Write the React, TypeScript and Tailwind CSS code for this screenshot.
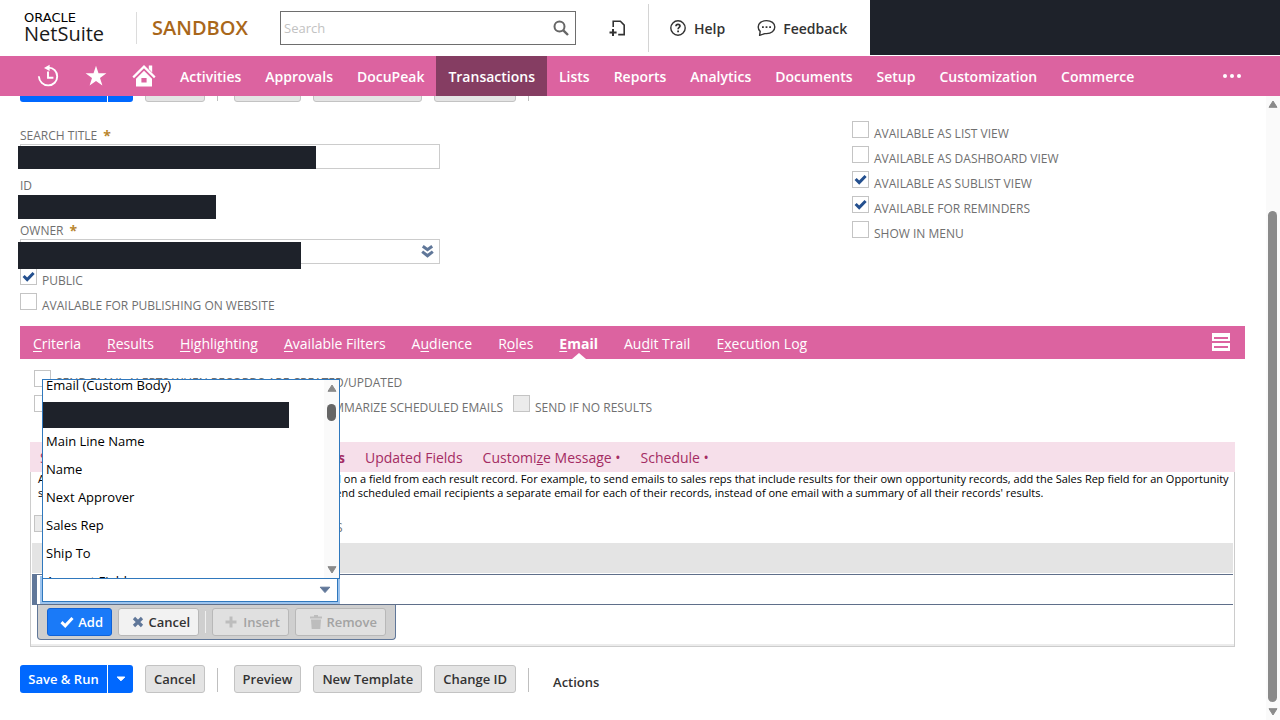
import type { ReactNode } from "react";
import clsx from "clsx";

interface CheckProps {
  id: string;
  label: string;
  checked?: boolean;
  disabled?: boolean;
}

const navItems = [
  "Activities",
  "Approvals",
  "DocuPeak",
  "Transactions",
  "Lists",
  "Reports",
  "Analytics",
  "Documents",
  "Setup",
  "Customization",
  "Commerce",
];

// [before, access key, after]
const tabs = [
  ["", "C", "riteria"],
  ["", "R", "esults"],
  ["", "H", "ighlighting"],
  ["", "A", "vailable Filters"],
  ["A", "u", "dience"],
  ["R", "o", "les"],
  ["", "E", "mail"],
  ["Au", "d", "it Trail"],
  ["E", "x", "ecution Log"],
];

const viewOptions: CheckProps[] = [
  { id: "list-view", label: "AVAILABLE AS LIST VIEW" },
  { id: "dashboard-view", label: "AVAILABLE AS DASHBOARD VIEW" },
  { id: "sublist-view", label: "AVAILABLE AS SUBLIST VIEW", checked: true },
  { id: "reminders", label: "AVAILABLE FOR REMINDERS", checked: true },
  { id: "show-in-menu", label: "SHOW IN MENU" },
];

const recipientFields = [
  "Email (Custom Body)",
  "",
  "Main Line Name",
  "Name",
  "Next Approver",
  "Sales Rep",
  "Ship To",
  "Account Fields...",
];

function Check({ id, label, checked, disabled }: CheckProps) {
  return (
    <div className="flex h-[25px] shrink-0 items-start gap-[5px]">
      <span className="relative flex h-[17px] w-[17px] shrink-0">
        <input
          id={id}
          type="checkbox"
          defaultChecked={checked}
          disabled={disabled}
          className="h-[17px] w-[17px] appearance-none border border-[#c4c4c4] bg-white disabled:bg-[#ebebeb]"
        />
        {checked && (
          <svg viewBox="0 0 17 17" className="pointer-events-none absolute inset-0 h-[17px] w-[17px]">
            <path d="M3.6 8L7.2 11.6L13.6 5" fill="none" stroke="#24508f" strokeWidth="3" />
          </svg>
        )}
      </span>
      <label htmlFor={id} className="mt-1 text-xs leading-[17px] whitespace-nowrap text-[#6f6f6f]">
        {label}
      </label>
    </div>
  );
}

function FieldLabel({ htmlFor, required, children }: { htmlFor: string; required?: boolean; children: ReactNode }) {
  return (
    <label htmlFor={htmlFor} className="flex gap-1.5 pt-0.5 text-xs leading-4 text-[#6f6f6f]">
      {children}
      {required && <span className="text-sm leading-4 font-bold text-[#b9862f]">*</span>}
    </label>
  );
}

function GreyButton({ children }: { children: ReactNode }) {
  return (
    <button className="h-7 rounded-[3px] border border-[#c3c3c3] bg-[#e4e4e4] px-2 pt-0.5 text-[13px] font-semibold whitespace-nowrap text-[#333]">
      {children}
    </button>
  );
}

function ActionBar({ withActions }: { withActions?: boolean }) {
  return (
    <div className="flex h-7 shrink-0 items-center gap-3">
      <div className="flex h-7 gap-px">
        <button className="w-[87px] rounded-l-[3px] bg-[#0068ff] pt-0.5 text-[13px] font-semibold whitespace-nowrap text-white">
          Save &amp; Run
        </button>
        <button aria-label="More save options" className="flex w-[25px] items-center justify-center rounded-r-[3px] bg-[#0068ff]">
          <svg viewBox="0 0 10 6" className="h-1.5 w-2.5">
            <path d="M1.2 1H8.8L5 4.8Z" fill="#fff" stroke="#fff" strokeLinejoin="round" />
          </svg>
        </button>
      </div>
      <GreyButton>Cancel</GreyButton>
      <div className="mr-1 h-6 w-px translate-y-px bg-[#bfbfbf]" />
      <GreyButton>Preview</GreyButton>
      <GreyButton>New Template</GreyButton>
      <GreyButton>Change ID</GreyButton>
      <div className="h-6 w-px translate-y-px bg-[#bfbfbf]" />
      {withActions && (
        <button className="mt-2 ml-3 text-[13px] font-semibold text-[#333]">Actions</button>
      )}
    </div>
  );
}

function Header() {
  return (
    <header className="flex h-14 shrink-0 bg-white">
      <div className="flex shrink-0 items-center">
        <div className="ml-6 flex w-28 flex-col">
          <span className="font-['DejaVu_Sans'] text-[13px] leading-[10px] text-black">ORACLE</span>
          <span className="text-xl leading-[21px] text-[#1a1a1a]">NetSuite</span>
        </div>
        <div className="h-8 w-px bg-[#dcdcdc]" />
        <span className="w-[143px] pl-[15px] text-xl font-semibold text-[#a9671a]">SANDBOX</span>
        <div className="flex h-[34px] w-[296px] items-center border border-[#6e6e6e]">
          <input
            aria-label="Search"
            placeholder="Search"
            className="h-full min-w-0 flex-1 px-[3px] text-[13px] text-[#333] outline-none placeholder:text-[#c2c2c2]"
          />
          <button aria-label="Run search" className="mr-[5px] flex">
            <svg viewBox="0 0 18 18" className="h-[18px] w-[18px]" fill="none" stroke="#666">
              <circle cx="7.5" cy="7.5" r="5" strokeWidth="2" />
              <path d="M11.3 11.3L16 16" strokeWidth="2.4" />
            </svg>
          </button>
        </div>
        <button aria-label="Create new" className="ml-[33px] flex">
          <svg viewBox="0 0 17 17" className="h-[17px] w-[17px]" fill="none" stroke="#333" strokeWidth="1.6">
            <path d="M4.2 7V1.3H11.4L15.2 5.2V14.6H9.2" />
            <path d="M4 9V16M0.5 12.4H7.6" strokeWidth="2" />
          </svg>
        </button>
        <div className="ml-[22px] h-12 w-px bg-[#d4d4d4]" />
        <button className="ml-[21px] flex items-center gap-2 text-sm font-semibold text-[#333]">
          <svg viewBox="0 0 16 16" className="h-4 w-4" fill="none" stroke="#333" strokeWidth="1.4">
            <circle cx="8" cy="8" r="7.2" />
            <path d="M6 6.3C6 4.9 6.9 4.3 8 4.3C9.2 4.3 10 5 10 6.1C10 7.4 8.1 7.5 8.1 9.2" strokeWidth="1.7" />
            <path d="M7.2 11.3H9" strokeWidth="1.8" />
          </svg>
          <span className="pt-0.5">Help</span>
        </button>
        <button className="ml-8 flex items-center gap-[7px] text-sm font-semibold text-[#333]">
          <svg viewBox="0 0 19 18" className="h-[18px] w-[19px]" fill="none" stroke="#333" strokeWidth="1.4">
            <path d="M2.6 16.4L3.2 12.4C1.8 11.2 1.2 9.8 1.2 8.1C1.2 4.3 4.7 1.6 9.5 1.6C14.3 1.6 17.8 4.3 17.8 8.1C17.8 12 14.3 14.6 9.5 14.6H7.8Z" strokeLinejoin="round" />
            <path d="M5 8.2H6.8M8.6 8.2H10.4M12.2 8.2H14" strokeWidth="1.8" />
          </svg>
          <span className="pt-0.5">Feedback</span>
        </button>
      </div>
      <div className="ml-[23px] h-[55px] flex-1 bg-[#1e222a]" />
    </header>
  );
}

function NavBar() {
  return (
    <nav className="flex h-10 shrink-0 items-center bg-[#dc63a0] pr-6 pl-6 text-white">
      <button aria-label="Recent records" className="flex w-12 justify-center">
        <svg viewBox="0 0 24 24" className="h-6 w-6" fill="none" stroke="#fff">
          <path d="M12.5 3.6C17.4 3.6 21.2 7.6 21.2 12.5C21.2 17.4 17.4 21.4 12.3 21.4C7.2 21.4 3.2 17.6 2.8 12.2" strokeWidth="1.9" />
          <path d="M12 7.6V13.8H17.4" strokeWidth="1.9" />
          <path d="M8 3.9L13.6 0.8V7Z" fill="#fff" stroke="none" />
        </svg>
      </button>
      <button aria-label="Shortcuts" className="flex w-12 justify-center">
        <svg viewBox="0 0 22 22" className="h-[22px] w-[22px]">
          <path d="M11 0.8L13.5 8.2H21.4L15 12.9L17.4 20.6L11 15.9L4.6 20.6L7 12.9L0.6 8.2H8.5Z" fill="#fff" />
        </svg>
      </button>
      <button aria-label="Home" className="flex w-12 justify-center">
        <svg viewBox="0 0 24 24" className="h-6 w-6">
          <path d="M1.2 13.4L12 2.6L22.8 13.4" fill="none" stroke="#fff" strokeWidth="2.2" />
          <path d="M16.8 1.5H20.2V8.4L16.8 5Z" fill="#fff" />
          <path d="M12 6.8L20 14.8V22.5H4V14.8ZM9.4 14V18.6H14.6V14Z" fill="#fff" fillRule="evenodd" />
        </svg>
      </button>
      {navItems.map((item) => (
        <a
          key={item}
          href="#"
          className={clsx(
            "flex h-10 items-center px-3 pt-0.5 text-sm font-semibold whitespace-nowrap",
            item === "Transactions" && "bg-[#853d62]"
          )}
        >
          {item}
        </a>
      ))}
      <button aria-label="More" className="ml-auto flex w-12 justify-center">
        <svg viewBox="0 0 20 4" className="h-1 w-5" fill="#fff">
          <circle cx="3" cy="2" r="2" />
          <circle cx="10" cy="2" r="2" />
          <circle cx="17" cy="2" r="2" />
        </svg>
      </button>
    </nav>
  );
}

function SearchForm() {
  return (
    <section className="mt-[19px] flex px-5">
      <div className="w-[832px] pt-[5px]">
        <div className="relative w-[420px]">
          <FieldLabel htmlFor="title" required>SEARCH TITLE</FieldLabel>
          <input id="title" type="text" className="block h-[25px] w-full border border-[#ccc]" />
          <div className="absolute bottom-0 -left-0.5 h-[23px] w-[298px] bg-[#1e222a]" />
        </div>
        <div className="relative mt-[7px] w-[420px]">
          <FieldLabel htmlFor="search-id">ID</FieldLabel>
          <output id="search-id" className="block h-[25px]" />
          <div className="absolute bottom-0 -left-0.5 h-6 w-[198px] bg-[#1e222a]" />
        </div>
        <div className="relative mt-0.5 w-[420px]">
          <FieldLabel htmlFor="owner" required>OWNER</FieldLabel>
          <div className="flex h-[25px] items-center border border-[#ccc]">
            <input id="owner" type="text" className="h-full min-w-0 flex-1 outline-none" />
            <button aria-label="Choose owner" className="mr-[5px] flex">
              <svg viewBox="0 0 13 13" className="h-[13px] w-[13px]" fill="none" stroke="#607799" strokeWidth="3">
                <path d="M1.8 1.2L6.5 4.6L11.2 1.2M1.2 6.6L6.5 10.8L11.8 6.6" />
              </svg>
            </button>
          </div>
          <div className="absolute top-[21px] -left-0.5 z-10 h-[27px] w-[283px] bg-[#1e222a]" />
        </div>
        <div className="mt-1">
          <Check id="public" label="PUBLIC" checked />
          <Check id="publishing" label="AVAILABLE FOR PUBLISHING ON WEBSITE" />
        </div>
      </div>
      <div>
        {viewOptions.map((option) => (
          <Check key={option.id} {...option} />
        ))}
      </div>
    </section>
  );
}

function RecipientDropdown() {
  return (
    <div className="absolute bottom-full -left-px z-20 flex h-[200px] w-[298px] overflow-hidden border border-[#2f78bd] bg-white">
      <ul role="listbox" aria-label="Recipient fields" className="-mt-[9px] flex-1">
        {recipientFields.map((field, i) => (
          <li key={i} role="option" aria-selected={false} className="flow-root h-7 text-[13px] leading-7 whitespace-nowrap text-black">
            {field ? (
              <span className="pl-[3px]">{field}</span>
            ) : (
              <span className="mt-[3px] block h-[26px] w-[246px] bg-[#1e222a]" />
            )}
          </li>
        ))}
      </ul>
      <div className="flex w-[15px] flex-col items-center bg-[#fafafa] py-1">
        <svg viewBox="0 0 10 8" className="h-2 w-2.5">
          <path d="M5 1L9 7.3H1Z" fill="#8a8a8a" stroke="#8a8a8a" strokeLinejoin="round" />
        </svg>
        <div className="mt-3 h-[17px] w-[9px] rounded-full bg-[#666]" />
        <svg viewBox="0 0 10 8" className="mt-auto h-2 w-2.5">
          <path d="M5 7L9 0.7H1Z" fill="#8a8a8a" stroke="#8a8a8a" strokeLinejoin="round" />
        </svg>
      </div>
    </div>
  );
}

function RecipientRow() {
  return (
    <div className="mx-px mt-px">
      <div className="flex h-[31px] items-center border-y border-[#5f6f8a] bg-white">
        <div className="h-[31px] w-[5px] shrink-0 bg-[#607799]" />
        <div className="relative ml-[5px] flex h-6 w-[296px] items-center border border-[#2f78bd] bg-white shadow-[0_0_0_2px_#9dc4ee]">
          <input
            aria-label="Recipient field"
            role="combobox"
            aria-expanded="true"
            className="h-full min-w-0 flex-1 px-1 text-[13px] outline-none"
          />
          <button aria-label="Toggle list" className="mr-1.5 flex">
            <svg viewBox="0 0 12 8" className="h-2 w-3">
              <path d="M1.2 1.2H10.8L6 6.6Z" fill="#607799" stroke="#607799" strokeLinejoin="round" />
            </svg>
          </button>
          <RecipientDropdown />
        </div>
      </div>
      <div className="ml-[5px] flex h-[35px] w-[359px] items-center gap-1.5 rounded-b-[4px] border border-t-0 border-[#607799] bg-[#cfcfcf] px-[9px]">
        <button className="flex h-7 w-[65px] items-center justify-end gap-1 rounded-[3px] border border-[#1062d6] bg-[#1a7af8] pr-2 text-[13px] font-semibold text-white">
          <svg viewBox="0 0 14 12" className="h-3 w-3.5">
            <path d="M1.5 6.2L5.2 9.8L12.5 2" fill="none" stroke="#fff" strokeWidth="3" />
          </svg>
          <span className="pt-0.5">Add</span>
        </button>
        <button className="flex h-7 w-[81px] items-center justify-end gap-1 rounded-[3px] border border-[#b8b8b8] bg-[#f2f2f2] pr-2 text-[13px] font-semibold text-[#333]">
          <svg viewBox="0 0 12 12" className="h-3 w-3">
            <path d="M2 2L10 10M10 2L2 10" stroke="#607799" strokeWidth="3.2" />
          </svg>
          <span className="pt-0.5">Cancel</span>
        </button>
        <div className="h-[22px] w-px bg-[#f0f0f0]" />
        <button disabled className="flex h-7 w-[77px] items-center justify-end gap-1.5 rounded-[3px] border border-[#b8b8b8] bg-[#e0e0e0] pr-2 text-[13px] font-semibold text-[#a3a3a3]">
          <svg viewBox="0 0 12 12" className="h-3 w-3">
            <path d="M6 0.5V11.5M0.5 6H11.5" stroke="#bdbdbd" strokeWidth="3" />
          </svg>
          <span className="pt-0.5">Insert</span>
        </button>
        <button disabled className="flex h-7 w-[91px] items-center justify-end gap-1 rounded-[3px] border border-[#b8b8b8] bg-[#e0e0e0] pr-2 text-[13px] font-semibold text-[#a3a3a3]">
          <svg viewBox="0 0 12 14" className="h-3.5 w-3" fill="#bdbdbd">
            <path d="M0 1.5H4V0H8V1.5H12V3.5H0ZM1 4.5H11L10.3 14H1.7Z" />
          </svg>
          <span className="pt-0.5">Remove</span>
        </button>
      </div>
    </div>
  );
}

function EmailPanel() {
  return (
    <section className="px-2.5 pt-[11px]">
      <div className="pl-1">
        <Check id="alerts" label="SEND EMAIL ALERTS WHEN RECORDS ARE CREATED/UPDATED" />
        <div className="flex gap-2.5">
          <div className="w-[252px]">
            <Check id="scheduled" label="SEND EMAILS ACCORDING TO SCHEDULE" />
          </div>
          <Check id="summarize" label="SUMMARIZE SCHEDULED EMAILS" />
          <Check id="no-results" label="SEND IF NO RESULTS" disabled />
        </div>
      </div>

      <div className="mt-[22px] flex h-[30px] items-center gap-5 bg-[#f6dfea] px-2.5 pt-0.5 text-sm whitespace-nowrap text-[#a42c63]">
        <div className="flex w-[305px] justify-between">
          <a href="#">Specific Recipients</a>
          <a href="#" className="font-bold">Recipients from Results</a>
        </div>
        <a href="#">Updated Fields</a>
        <a href="#">Customi<u>z</u>e Message •</a>
        <a href="#">Schedule •</a>
      </div>

      <div className="border border-t-0 border-[#ccc]">
        <p className="px-[7px] text-[11px] leading-[14px] whitespace-nowrap text-black">
          <span className="inline-flex w-[303px] justify-between">
            <span>Add recipients to this search dynamically,</span>
            <span>based</span>
          </span>{" "}
          on a field from each result record. For example, to send emails to sales reps that include results for their own
          opportunity records, add the Sales Rep field for an Opportunity
          <br />
          <span className="inline-flex w-[317px] justify-between">
            <span>search. You can check the box below to</span>
            <span>send</span>
          </span>{" "}
          scheduled email recipients a separate email for each of their records, instead of one email with a summary of
          all their records' results.
        </p>
        <div className="mt-[15px] pl-[3px]">
          <Check id="individual" label="GIVE SCHEDULED RECIPIENTS INDIVIDUAL RESULTS" disabled />
        </div>
        <div className="mx-px mt-[3px] h-[30px] bg-[#e4e4e4]" />
        <RecipientRow />
        <div className="mt-1 h-0.5 bg-[#ececec]" />
      </div>
    </section>
  );
}

export default function App() {
  return (
    <div className="flex h-screen flex-col overflow-hidden bg-white font-['Open_Sans',sans-serif]">
      <Header />
      <NavBar />
      <div className="flex min-h-0 flex-1">
        <main className="min-w-0 flex-1 overflow-hidden">
          {/* Top buttons, scrolled under the nav bar */}
          <div className="flex h-1.5 items-end overflow-hidden pl-5">
            <ActionBar />
          </div>

          <SearchForm />

          <div className="mt-2 mr-[21px] ml-5">
            <div className="flex h-[33px] items-center bg-[#dc63a0] text-sm whitespace-nowrap text-white">
              {tabs.map(([before, key, after]) => {
                const active = key + after === "Email";
                return (
                  <a
                    key={before + key + after}
                    href="#"
                    className={clsx("relative flex h-full items-center px-[13px] pt-0.5", active && "font-bold")}
                  >
                    <span>
                      {before}
                      <u className="underline-offset-2">{key}</u>
                      {after}
                    </span>
                    {active && (
                      <svg viewBox="0 0 14 6" className="absolute bottom-0 left-1/2 h-1.5 w-3.5 -translate-x-1/2">
                        <path d="M0 6L7 0L14 6Z" fill="#fff" />
                      </svg>
                    )}
                  </a>
                );
              })}
              <button aria-label="Stacked layout" className="mr-[15px] ml-auto flex pb-0.5">
                <svg viewBox="0 0 18 18" className="h-[18px] w-[18px]" fill="#fff">
                  <path d="M0 0H18V8H0ZM2 4V6H16V4ZM0 10H18V18H0ZM2 13V15H16V13Z" fillRule="evenodd" />
                </svg>
              </button>
            </div>

            <EmailPanel />
          </div>

          <div className="mt-[18px] pl-5">
            <ActionBar withActions />
          </div>
        </main>

        {/* Scrollbar */}
        <div className="flex w-3.5 shrink-0 flex-col items-center bg-[#fafafa] pt-1 pr-px pb-1">
          <svg viewBox="0 0 10 8" className="h-2 w-2.5">
            <path d="M5 1L9 7.3H1Z" fill="#8a8a8a" stroke="#8a8a8a" strokeLinejoin="round" />
          </svg>
          <div className="mt-[103px] mb-1.5 w-[9px] flex-1 rounded-full bg-[#8a8a8a]" />
          <svg viewBox="0 0 10 8" className="h-2 w-2.5">
            <path d="M5 7L9 0.7H1Z" fill="#8a8a8a" stroke="#8a8a8a" strokeLinejoin="round" />
          </svg>
        </div>
      </div>
    </div>
  );
}
